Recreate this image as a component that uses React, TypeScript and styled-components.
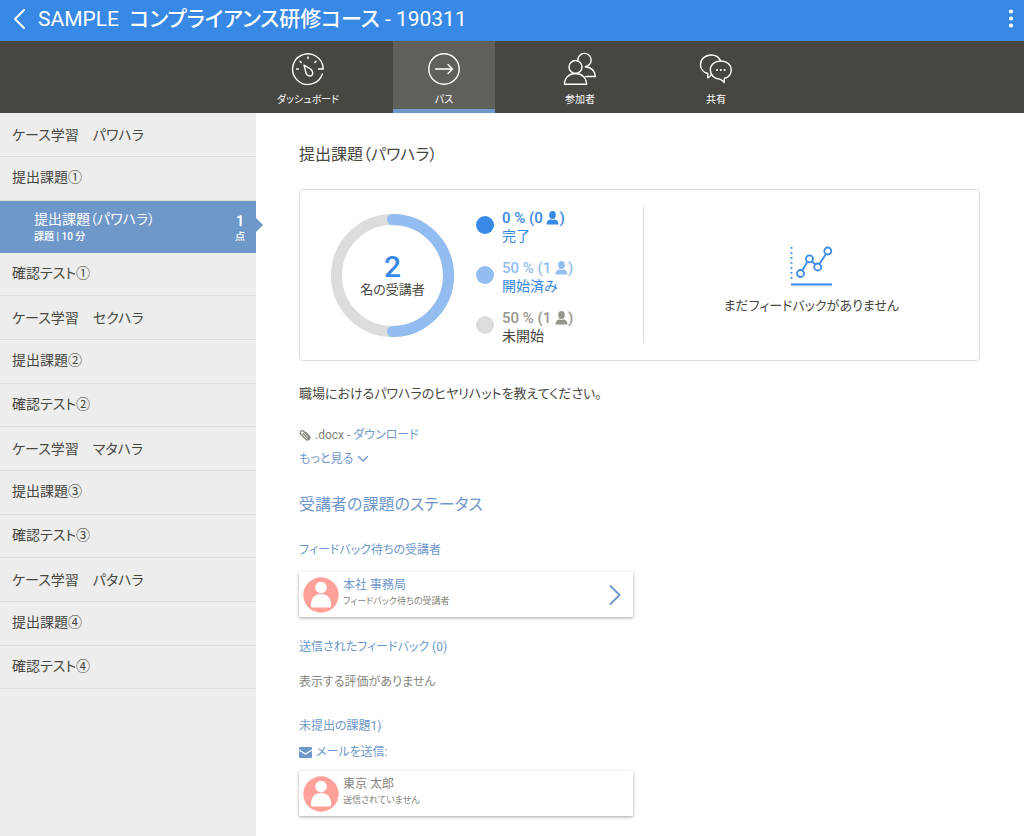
import React from "react";
import styled, { createGlobalStyle } from "styled-components";

const color = {
  brand: "#3888e6",
  brandLight: "#93bdf1",
  link: "#6e98ca",
  nav: "#474741",
  navActive: "#60605a",
  side: "#ededed",
  line: "#dcdcdc",
  text: "#474741",
  muted: "#85857c",
};

const GlobalStyle = createGlobalStyle`
  *, *::before, *::after { box-sizing: border-box; }
  body {
    margin: 0;
    background: #fff;
    color: ${color.text};
    font-family: Roboto, "Noto Sans CJK JP", sans-serif;
    font-size: 14px;
    line-height: 24px;
    font-feature-settings: "palt";
  }
  h1, h2, h3, p, ul { margin: 0; padding: 0; font-weight: 400; }
  ul { list-style: none; }
  a { color: inherit; text-decoration: none; }
  button { font: inherit; color: inherit; background: none; border: 0; padding: 0; cursor: pointer; }
  svg { display: block; flex: none; }
`;

const Page = styled.div`
  display: flex;
  flex-direction: column;
  min-height: 100vh;
`;

const TopBar = styled.header`
  display: flex;
  align-items: center;
  height: 41px;
  padding: 0 9px 4px 12px;
  background: ${color.brand};
  color: #fff;
`;

const BarButton = styled.button`
  display: flex;
  align-items: center;
`;

const Title = styled.h1`
  flex: 1;
  padding-left: 12px;
  font-size: 21px;
  line-height: 36px;
  white-space: pre;
`;

const CourseName = styled.span`
  font-weight: 500;
`;

const Nav = styled.nav`
  display: flex;
  justify-content: center;
  gap: 34px;
  height: 72px;
  background: ${color.nav};
  color: #fff;
`;

const NavItem = styled.a<{ $active?: boolean }>`
  display: flex;
  flex-direction: column;
  align-items: center;
  gap: 5px;
  width: 102px;
  padding-top: 11px;
  font-size: 10px;
  line-height: 18px;
  background: ${(p) => (p.$active ? color.navActive : "transparent")};
  border-bottom: 4px solid ${(p) => (p.$active ? color.link : "transparent")};
`;

const Body = styled.div`
  display: flex;
  flex: 1;
`;

const Sidebar = styled.aside`
  flex: none;
  width: 25%;
  background: ${color.side};
`;

type Kind = "case" | "submit" | "test";

const rowShape: Record<Kind, string> = {
  case: "height: 44px;",
  submit: "height: 44px; padding-bottom: 4px;",
  test: "height: 43px; padding-bottom: 2px;",
};

const Row = styled.a<{ $kind: Kind }>`
  display: flex;
  align-items: center;
  padding: 0 12px;
  ${(p) => rowShape[p.$kind]}
  border-bottom: 1px solid ${color.line};
  white-space: pre;
`;

const ActiveRow = styled.a`
  position: relative;
  display: flex;
  align-items: center;
  justify-content: space-between;
  height: 52px;
  padding: 0 11px 0 34px;
  background: ${color.link};
  color: #fff;
  &::after {
    content: "";
    position: absolute;
    left: 100%;
    top: 50%;
    margin-top: -9px;
    border: 7px solid transparent;
    border-right-width: 0;
    border-left-color: ${color.link};
  }
`;

const RowText = styled.span`
  display: flex;
  flex-direction: column;
  padding-top: 2px;
  line-height: 18px;
`;

const Score = styled(RowText)`
  align-items: center;
  font-weight: 700;
  padding-top: 4px;
  line-height: 16px;
`;

const Small = styled.span`
  font-size: 10px;
  font-weight: 500;
`;

const Main = styled.main`
  flex: 1;
  min-width: 0;
  padding: 30px 44px 20px 43px;
  font-size: 12px;
`;

const PageTitle = styled.h2`
  font-size: 16px;
`;

const StatsCard = styled.section`
  display: grid;
  grid-template-columns: 42fr 41fr;
  margin-top: 22px;
  padding: 17px 0;
  border: 1px solid #dfdfdf;
  border-radius: 4px;
`;

const Progress = styled.div`
  display: flex;
  align-items: center;
  gap: 22px;
  height: 136px;
  padding-left: 31px;
  border-right: 1px solid ${color.line};
`;

const Donut = styled.div`
  display: grid;
  place-items: center;
  & > * { grid-area: 1 / 1; }
`;

const DonutLabel = styled.div`
  padding-top: 2px;
  text-align: center;
  font-size: 13px;
  line-height: 18px;
`;

const Count = styled.div`
  font-size: 30px;
  line-height: 28px;
  font-weight: 500;
  color: ${color.brand};
`;

const Legend = styled.ul`
  display: flex;
  flex-direction: column;
  gap: 10px;
`;

const LegendItem = styled.li<{ $dot: string }>`
  display: flex;
  align-items: center;
  gap: 8px;
  &::before {
    content: "";
    width: 18px;
    height: 18px;
    border-radius: 50%;
    background: ${(p) => p.$dot};
  }
`;

const LegendText = styled.div`
  padding-top: 4px;
  font-size: 14px;
  line-height: 18px;
`;

const Percent = styled.div<{ $tint: string }>`
  display: flex;
  align-items: center;
  font-size: 15px;
  font-weight: 500;
  white-space: pre;
  color: ${(p) => p.$tint};
`;

const LegendName = styled.div<{ $tint: string }>`
  color: ${(p) => p.$tint};
`;

const Feedback = styled.div`
  display: flex;
  flex-direction: column;
  align-items: center;
  justify-content: center;
  gap: 8px;
  padding-top: 14px;
  font-size: 13px;
`;

const Question = styled.p`
  margin-top: 21px;
  font-size: 13px;
`;

const Attachment = styled.p`
  display: flex;
  align-items: center;
  gap: 4px;
  margin-top: 17px;
  color: ${color.muted};
`;

const Link = styled.a`
  color: ${color.link};
`;

const IconLink = styled.a`
  display: flex;
  align-items: center;
  gap: 4px;
  width: fit-content;
  color: ${color.link};
`;

const MailLink = styled(IconLink)`
  margin: 2px 0 -3px;
`;

const StatusTitle = styled.h2`
  margin-top: 22px;
  padding-bottom: 3px;
  font-size: 16px;
  color: ${color.link};
`;

const GroupTitle = styled.h3`
  margin-top: 18px;
  font-size: 12px;
  color: ${color.link};
`;

const Learner = styled.a`
  display: flex;
  align-items: center;
  gap: 4px;
  width: 49%;
  height: 45px;
  margin-top: 10px;
  padding: 0 12px 0 4px;
  background: #fff;
  box-shadow: 0 1px 3px rgba(0, 0, 0, 0.35);
`;

const LearnerText = styled.span`
  flex: 1;
  display: flex;
  flex-direction: column;
  padding-bottom: 3px;
`;

const LearnerName = styled.span<{ $linked?: boolean }>`
  line-height: 16px;
  color: ${(p) => (p.$linked ? color.link : color.muted)};
`;

const LearnerNote = styled.span`
  font-size: 9px;
  line-height: 16px;
  color: ${color.muted};
`;

const Empty = styled.p`
  margin: 11px 0 20px;
  color: ${color.muted};
`;

const stroke = { fill: "none", stroke: "currentColor", strokeLinecap: "round", strokeLinejoin: "round" } as const;

const GaugeIcon = () => (
  <svg width="34" height="34" viewBox="0 0 34 34" {...stroke} strokeWidth="1.4">
    <path d="M27.5 17h4.7A15.3 15.3 0 1 0 31.4 22" />
    <path d="M17 5v1.6M9 9.2l1.2 1.2M25 9.2l-1.2 1.2M5.6 17h1.8" />
    <path d="M13 13.200l6.600 3.800c2.400 2 2.700 4.800 1.300 6.300-1.500 1.300-4.400.9-5.800-1.900z" />
  </svg>
);

const PathIcon = () => (
  <svg width="34" height="34" viewBox="0 0 34 34" {...stroke} strokeWidth="1.4">
    <circle cx="17" cy="17" r="15.200" />
    <path d="M8.500 17h17M21 12.500l4.500 4.500-4.500 4.500" />
  </svg>
);

const PeopleIcon = () => (
  <svg width="34" height="34" viewBox="0 0 34 34" {...stroke} strokeWidth="1.4">
    <circle cx="12.500" cy="15" r="6.500" />
    <path d="M1.500 32.200c0-6.500 4.500-10.700 11-10.700s11 4.200 11 10.700z" />
    <path d="M14.800 8.700a6.700 6.700 0 1 1 7.500 6c6 .6 9.700 4.300 10 9.800h-9.600" />
  </svg>
);

const ChatIcon = () => (
  <svg width="34" height="34" viewBox="0 0 34 34" {...stroke} strokeWidth="1.4">
    <path d="M21.500 8.600C19.800 5 16.500 3 12.300 3 6 3 1.500 7.200 1.500 12.700c0 4.200 3 7.700 7.300 8.800v4.300c1.500-.6 2.500-1.500 3.200-2.800" />
    <path d="M21.800 9c-6.200 0-10.500 3.900-10.500 9s4.300 9.300 10 9.300c1.600.5 3 2 4 3.200v-4c4.200-1.200 6.900-4.500 6.900-8.500 0-5.100-4.200-9-10.400-9z" />
    <path d="M18 18h.1M21.800 18h.1M25.600 18h.1" strokeWidth="2" />
  </svg>
);

const PersonIcon = () => (
  <svg width="13" height="14" viewBox="0 0 13 14" fill="currentColor">
    <ellipse cx="6.500" cy="4" rx="3.300" ry="3.900" />
    <path d="M.5 13.500c0-3 1.300-4.500 4-5.200 1.200.8 2.800.8 4 0 2.700.7 4 2.200 4 5.200z" />
  </svg>
);

const Avatar = () => (
  <svg width="36" height="36" viewBox="0 0 36 36">
    <circle cx="18" cy="18" r="17.700" fill="#ffa199" />
    <circle cx="18" cy="10.500" r="5.800" fill="#fff" />
    <path d="M8 29c-.5-7.500 3.500-12 10-12s10.500 4.500 10 12c-.1 1-.7 1.500-1.600 1.500H9.600C8.700 30.500 8.100 30 8 29z" fill="#fff" />
  </svg>
);

const ClipIcon = () => (
  <svg width="12" height="12" viewBox="0 0 12 12" {...stroke} stroke={color.muted} strokeWidth="1.300">
    <path d="M4 4.500l4.300 4.400c1 .9 2.300-.4 1.400-1.400L4.600 2.300C2.700.6.100 3 1.700 5l5.200 5.200c2.400 2 5.200-.7 3.500-2.900L6.700 3.500" />
  </svg>
);

const TrendIcon = () => (
  <svg width="43" height="40" viewBox="0 0 43 40" fill="none" stroke={color.brand} strokeWidth="1.800">
    <path d="M1.500 1v34" strokeDasharray="1.700 3.300" />
    <path d="M1 38.500h41" strokeWidth="2" />
    <path d="M12.300 24.500l5.400-9.400M22 15.500l3.200 2.900M29.500 18l6.800-10.600" />
    <circle cx="10.500" cy="27.500" r="3.500" />
    <circle cx="19.500" cy="12.800" r="3.500" />
    <circle cx="27.700" cy="21" r="3.500" />
    <circle cx="37.800" cy="5" r="3.500" />
  </svg>
);

const MailIcon = () => (
  <svg width="13" height="11" viewBox="0 0 13 11">
    <rect width="13" height="11" rx="1" fill={color.link} />
    <path d="M0 3l6.500 4L13 3" fill="none" stroke="#fff" strokeWidth="1.200" />
  </svg>
);

const tabs = [
  { label: "ダッシュボード", icon: <GaugeIcon /> },
  { label: "パス", icon: <PathIcon />, active: true },
  { label: "参加者", icon: <PeopleIcon /> },
  { label: "共有", icon: <ChatIcon /> },
];

const rowsBefore: [Kind, string][] = [
  ["case", "ケース学習　パワハラ"],
  ["submit", "提出課題①"],
];

const rowsAfter: [Kind, string][] = [
  ["test", "確認テスト①"],
  ["case", "ケース学習　セクハラ"],
  ["submit", "提出課題②"],
  ["test", "確認テスト②"],
  ["case", "ケース学習　マタハラ"],
  ["submit", "提出課題③"],
  ["test", "確認テスト③"],
  ["case", "ケース学習　パタハラ"],
  ["submit", "提出課題④"],
  ["test", "確認テスト④"],
];

const legend = [
  { dot: color.brand, tint: color.brand, name: "完了", nameTint: color.brand, value: "0 % (0 " },
  { dot: color.brandLight, tint: color.brandLight, name: "開始済み", nameTint: color.brand, value: "50 % (1 " },
  { dot: color.line, tint: "#96968e", name: "未開始", nameTint: color.text, value: "50 % (1 " },
];

const Rows = ({ rows }: { rows: [Kind, string][] }) => (
  <>
    {rows.map(([kind, label]) => (
      <li key={label}>
        <Row href="#" $kind={kind}>{label}</Row>
      </li>
    ))}
  </>
);

export default function App() {
  return (
    <Page>
      <GlobalStyle />
      <TopBar>
        <BarButton aria-label="戻る">
          <svg width="14" height="20" viewBox="0 0 14 20" {...stroke} strokeWidth="2">
            <path d="M12 1L3 10l9 9" />
          </svg>
        </BarButton>
        <Title>
          {"SAMPLE  "}
          <CourseName>コンプライアンス研修コース</CourseName>
          {" - 190311"}
        </Title>
        <BarButton aria-label="メニュー">
          <svg width="8" height="20" viewBox="0 0 8 20" fill="currentColor">
            <circle cx="4" cy="2.500" r="2.100" />
            <circle cx="4" cy="9.500" r="2.100" />
            <circle cx="4" cy="16.500" r="2.100" />
          </svg>
        </BarButton>
      </TopBar>
      <Nav>
        {tabs.map((t) => (
          <NavItem key={t.label} href="#" $active={t.active}>
            {t.icon}
            {t.label}
          </NavItem>
        ))}
      </Nav>
      <Body>
        <Sidebar>
          <ul>
            <Rows rows={rowsBefore} />
            <li>
              <ActiveRow href="#" aria-current="page">
                <RowText>
                  提出課題（パワハラ）
                  <Small>課題 | 10 分</Small>
                </RowText>
                <Score>
                  1<Small>点</Small>
                </Score>
              </ActiveRow>
            </li>
            <Rows rows={rowsAfter} />
          </ul>
        </Sidebar>
        <Main>
          <PageTitle>提出課題（パワハラ）</PageTitle>
          <StatsCard>
            <Progress>
              <Donut>
                <svg width="123" height="123" viewBox="0 0 123 123" fill="none" strokeWidth="11">
                  <circle cx="61.500" cy="61.500" r="56" stroke={color.line} />
                  <path d="M61.500 5.500a56 56 0 0 1 0 112" stroke={color.brandLight} strokeLinecap="round" />
                </svg>
                <DonutLabel>
                  <Count>2</Count>
                  名の受講者
                </DonutLabel>
              </Donut>
              <Legend>
                {legend.map((l) => (
                  <LegendItem key={l.name} $dot={l.dot}>
                    <LegendText>
                      <Percent $tint={l.tint}>
                        {l.value}
                        <PersonIcon />)
                      </Percent>
                      <LegendName $tint={l.nameTint}>{l.name}</LegendName>
                    </LegendText>
                  </LegendItem>
                ))}
              </Legend>
            </Progress>
            <Feedback>
              <TrendIcon />
              まだフィードバックがありません
            </Feedback>
          </StatsCard>
          <Question>職場におけるパワハラのヒヤリハットを教えてください。</Question>
          <Attachment>
            <ClipIcon />
            <span>
              .docx - <Link href="#">ダウンロード</Link>
            </span>
          </Attachment>
          <IconLink href="#">
            もっと見る
            <svg width="12" height="8" viewBox="0 0 12 8" {...stroke} strokeWidth="1.400">
              <path d="M1.500 1.500L6 6l4.500-4.500" />
            </svg>
          </IconLink>
          <StatusTitle>受講者の課題のステータス</StatusTitle>
          <GroupTitle>フィードバック待ちの受講者</GroupTitle>
          <Learner href="#">
            <Avatar />
            <LearnerText>
              <LearnerName $linked>本社 事務局</LearnerName>
              <LearnerNote>フィードバック待ちの受講者</LearnerNote>
            </LearnerText>
            <svg width="12" height="20" viewBox="0 0 12 20" {...stroke} stroke={color.link} strokeWidth="1.800">
              <path d="M1.500 1l9 9-9 9" />
            </svg>
          </Learner>
          <GroupTitle>送信されたフィードバック (0)</GroupTitle>
          <Empty>表示する評価がありません</Empty>
          <GroupTitle>未提出の課題1)</GroupTitle>
          <MailLink href="#">
            <MailIcon />
            メールを送信:
          </MailLink>
          <Learner href="#">
            <Avatar />
            <LearnerText>
              <LearnerName>東京 太郎</LearnerName>
              <LearnerNote>送信されていません</LearnerNote>
            </LearnerText>
          </Learner>
        </Main>
      </Body>
    </Page>
  );
}
